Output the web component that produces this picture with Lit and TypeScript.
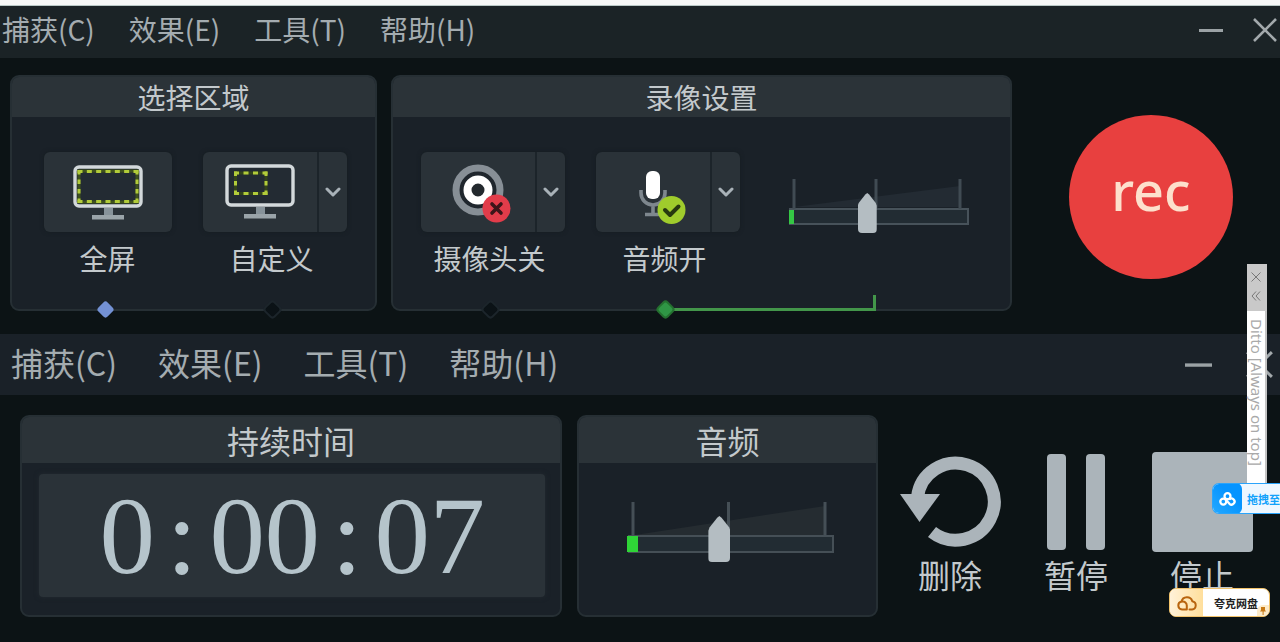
import { LitElement, html, css, svg, nothing } from "lit";
import { customElement, property } from "lit/decorators.js";
import { classMap } from "lit/directives/class-map.js";

const MENU = ["捕获(C)", "效果(E)", "工具(T)", "帮助(H)"];

const chevron = html`<svg width="16" height="10" viewBox="0 0 16 10" fill="none" stroke="#a9b2b8" stroke-width="3" stroke-linecap="round" stroke-linejoin="round"><path d="M2 2l6 6 6-6" /></svg>`;

const monitorBase = svg`
  <rect x="2" y="2" width="66" height="39" rx="4" fill="#232b33" stroke="#d3d9db" stroke-width="3.4" />
  <path d="M31 43h9v7h-9z" fill="#87939a" />
  <path d="M19 50h32v4.5h-32z" fill="#9aa4a9" />`;

const fullIcon = html`<svg width="70" height="56" viewBox="0 0 70 56">${monitorBase}
  <rect x="6" y="6" width="58" height="31" fill="none" stroke="#3f521d" stroke-width="3" />
  <path d="M4.500 6.500h61M4.500 36.500h61" stroke="#b2cc3a" stroke-width="3" stroke-dasharray="5 4.330" />
  <path d="M6 5v33M64 5v33" stroke="#b2cc3a" stroke-width="3" stroke-dasharray="4.500 5" /></svg>`;

const customIcon = html`<svg width="70" height="56" viewBox="0 0 70 56">${monitorBase}
  <rect x="10.500" y="9" width="30.500" height="20.500" fill="none" stroke="#33431c" stroke-width="3" />
  <path d="M9 9h33.500M9 29.500h33.500" stroke="#b2cc3a" stroke-width="3" stroke-dasharray="5 4.500" />
  <path d="M10.500 7.500v23.500M41 7.500v23.500" stroke="#b2cc3a" stroke-width="3" stroke-dasharray="4.500 5" /></svg>`;

const cameraIcon = html`<svg width="80" height="64" viewBox="0 0 80 64">
  <circle cx="40" cy="30" r="22" fill="#1f262d" stroke="#878f96" stroke-width="7" />
  <circle cx="40" cy="30" r="10.500" fill="#23292e" stroke="#fff" stroke-width="8" />
  <circle cx="58.500" cy="48.500" r="14" fill="#e23c4a" />
  <path d="M54 44l9 9M63 44l-9 9" stroke="#3c1519" stroke-width="3.600" stroke-linecap="round" /></svg>`;

const micIcon = html`<svg width="80" height="64" viewBox="0 0 80 64">
  <path d="M28 30v3a12 12 0 0 0 24 0v-3M40 45v9M32 54.500h16" fill="none" stroke="#7e878e" stroke-width="3.600" />
  <rect x="33" y="11" width="14" height="28" rx="6" fill="#fff" />
  <circle cx="58.500" cy="50" r="14" fill="#9fcc2c" />
  <path d="M52 50l5 5 8.500-8.500" fill="none" stroke="#27380f" stroke-width="4" stroke-linecap="round" stroke-linejoin="round" /></svg>`;

@customElement("title-bar")
class TitleBar extends LitElement {
  @property({ type: Boolean, reflect: true }) large = false;

  static styles = css`
    :host { display: flex; justify-content: space-between; align-items: center; height: 52px; padding: 0 3px 0 2px; background: #1b2326; color: #a4acb0; }
    :host([large]) { height: 61px; padding: 0 7px 0 11px; background: #1a2128; }
    .menu { display: flex; gap: 34px; }
    :host([large]) .menu { gap: 41px; }
    button { border: 0; padding: 0; margin: 0; background: none; color: inherit; font: inherit; cursor: pointer; }
    .item { font-size: 28px; line-height: 36px; padding-bottom: 6px; white-space: nowrap; }
    :host([large]) .item { font-size: 32px; }
    .controls { display: flex; align-items: center; gap: 30px; padding-bottom: 4px; }
    :host([large]) .controls { gap: 34px; padding-bottom: 1px; }
    .controls svg { display: block; width: 24px; height: 24px; }
    :host([large]) .controls svg { width: 27px; height: 27px; }
  `;

  render() {
    return html`
      <nav class="menu">${MENU.map((m) => html`<button class="item">${m}</button>`)}</nav>
      <div class="controls">
        <button aria-label="最小化"><svg viewBox="0 0 24 24"><path d="M0 12.500h24" stroke="#9ba2a5" stroke-width="3" /></svg></button>
        <button aria-label="关闭"><svg viewBox="0 0 24 24"><path d="M1 1l22 22M23 1L1 23" stroke="#a3a9ac" stroke-width="2.600" /></svg></button>
      </div>`;
  }
}

@customElement("level-slider")
class LevelSlider extends LitElement {
  @property({ type: Boolean, reflect: true }) large = false;
  @property({ type: Number }) value = 43;

  static styles = css`
    :host { display: grid; width: 180px; flex: none; }
    :host([large]) { width: 207px; }
    svg, input { grid-area: 1 / 1; width: 100%; }
    svg { display: block; height: 54px; }
    :host([large]) svg { height: 61px; }
    input { appearance: none; -webkit-appearance: none; align-self: end; margin: 0; height: 40px; background: none; }
    :host([large]) input { height: 46px; }
    input::-webkit-slider-thumb {
      -webkit-appearance: none; width: 19px; height: 40px; border-radius: 0 0 4px 4px; background: #b4bdc2;
      clip-path: polygon(50% 0, 60% 4%, 95% 25%, 100% 32%, 100% 100%, 0 100%, 0 32%, 5% 25%, 40% 4%);
    }
    :host([large]) input::-webkit-slider-thumb { width: 22px; height: 46px; }
  `;

  render() {
    const art = this.large
      ? svg`<path d="M8 34L198 5v29z" fill="#252c31" />
          <rect x="2" y="35" width="204" height="16" fill="#222c33" stroke="#454f56" stroke-width="2" />
          <path d="M6 1v34M101.500 1v34M198 1v34" stroke="#454f56" stroke-width="3" />
          <rect x="0" y="35" width="11" height="16" fill="#2fd437" />`
      : svg`<path d="M5 28L171 7v21z" fill="#232b33" />
          <rect x="1" y="30" width="178" height="15" fill="#222c33" stroke="#47525a" stroke-width="2" />
          <path d="M5 0v30M87 0v30M171 0v30" stroke="#404b53" stroke-width="3" />
          <rect x="0" y="31" width="5" height="14" fill="#35c745" />`;
    return html`
      <svg viewBox=${this.large ? "0 0 207 61" : "0 0 180 54"}>${art}</svg>
      <input type="range" min="0" max="100" .value=${String(this.value)} aria-label="音量" />`;
  }
}

@customElement("app-root")
class AppRoot extends LitElement {
  static styles = css`
    :host {
      display: block; position: relative; overflow: hidden; min-height: 100vh; background: #0c1315;
      font-family: "Noto Sans CJK SC", sans-serif; color: #c3c9cc;
    }
    * { box-sizing: border-box; }
    button { border: 0; padding: 0; margin: 0; background: none; color: inherit; font: inherit; cursor: pointer; }
    svg { display: block; }
    h2 { margin: 0; font-weight: 400; text-align: center; background: #2b3338; }

    .strip { height: 6px; background: #f6f7f7; border-bottom: 1px solid #b9c8c6; }
    .row { display: grid; align-items: stretch; }
    .setup { grid-template-columns: 367fr 621fr 250fr; gap: 14px; padding: 17px 4px 23px 10px; }
    .running { grid-template-columns: 542fr 316fr 387fr; padding: 20px 15px 24px 20px; }

    .panel { display: flex; flex-direction: column; background: #1a2128; border: 2px solid #262f34; border-radius: 9px; min-width: 0; }
    .panel h2 { border-radius: 7px 7px 0 0; }
    .setup h2 { font-size: 28px; line-height: 40px; }
    .running h2 { font-size: 32px; line-height: 46px; }
    .rec-zone { display: flex; justify-content: center; align-items: center; padding-top: 7px; }
    .audio { margin-left: 15px; }
    .actions { margin-left: 9px; display: grid; grid-template-columns: repeat(3, 1fr); }

    .tools { display: flex; justify-content: center; flex: 1; gap: 31px; padding-top: 35px; }
    .area .tools { padding-left: 3px; }
    .options .tools { padding-right: 14px; }
    .tool { position: relative; display: flex; flex-direction: column; align-items: center; padding-bottom: 33px; }
    .face { display: flex; height: 80px; border-radius: 6px; background: #2a3238; box-shadow: 0 0 4px #151c21; }
    .main { display: grid; place-items: center; width: 114px; }
    .single .main { width: 128px; padding-top: 2px; }
    .more { display: grid; place-items: center; width: 30px; border-left: 2px solid #1c242a; }
    .caption { margin-top: 8px; font-size: 28px; line-height: 36px; }
    .split .caption { padding-right: 6px; }
    .dot { position: absolute; left: calc(50% - 9px); bottom: -7px; width: 13px; height: 13px; border-radius: 3px; transform: rotate(45deg); background: #0b1216; outline: 2px solid #1c252b; outline-offset: -1px; }
    .dot.blue { background: #7391d4; outline: 0; }
    .dot.green { background: #2f9645; outline-color: #24702f; }
    .link { position: absolute; left: calc(50% + 6px); bottom: -2px; width: 202px; height: 16px; border: solid #43964a; border-width: 0 3px 3px 0; }
    .meter { padding: 27px 0 0 18px; }

    .rec { width: 164px; height: 164px; border-radius: 50%; background: #e8403f; color: #fde0cc; font: 500 54px/164px "Noto Sans", sans-serif; }
    .rec span { display: block; margin-top: -14px; }

    .clock { display: flex; justify-content: center; margin: 11px 15px 18px 17px; background: #2a3238; border-radius: 4px; color: #b5c4cb; font: 111px/123px "Liberation Serif", serif; box-shadow: 0 0 5px #222a30; }
    .digit { width: 55px; text-align: center; }
    .volume { display: flex; flex: 1; align-items: flex-start; justify-content: center; padding: 38px 0 0 6px; }

    .action { display: flex; flex-direction: column; align-items: center; padding-top: 35px; font-size: 32px; line-height: 44px; }
    .action svg { height: 104px; }
    .action span { margin-top: -2px; }

    .ditto { position: absolute; right: 13px; top: 264px; width: 20px; height: 230px; background: #fff; border-right: 2px solid #c4c4c4; color: #a9a9a9; }
    .ditto-head { display: flex; flex-direction: column; align-items: center; gap: 9px; width: 20px; height: 47px; padding: 8px 3px 0 0; background: #c9c9c9; }
    .ditto-title { writing-mode: vertical-rl; font: 15px/20px "Noto Sans", sans-serif; padding-top: 8px; white-space: nowrap; }

    .drop { position: absolute; right: 0; top: 483px; display: flex; align-items: center; width: 68px; height: 31px; overflow: hidden; border: solid #2aa4fb; border-width: 1px 0 1px 1px; border-radius: 7px 0 0 7px; background: #eef7ff; color: #12a2fb; font-size: 11px; font-weight: 700; white-space: nowrap; }
    .drop-logo { display: grid; place-items: center; flex: none; width: 29px; height: 31px; margin-right: 5px; border-radius: 6px; background: linear-gradient(45deg, #25a9ff, #0694ff 60%); }

    .quark { position: absolute; right: 10px; top: 588px; display: flex; align-items: center; width: 101px; height: 29px; overflow: hidden; border: 1px solid #f2c36b; border-radius: 7px; background: #fff; color: #222; font-size: 11px; font-weight: 700; white-space: nowrap; }
    .quark-logo { display: grid; place-items: center; flex: none; width: 33px; height: 29px; margin-right: 11px; background: linear-gradient(90deg, #fff1d8, #ffdf9c); }
    .pin { position: absolute; right: 0; bottom: 0; width: 12px; height: 11px; display: grid; place-items: center; background: #fdebc9; border-radius: 6px 0 0 0; }
  `;

  private tool(id: string, label: string, icon: unknown, split: boolean, dot: string, link = false) {
    return html`
      <div class=${classMap({ tool: true, split, single: !split })}>
        <div class="face">
          <button class="main" aria-labelledby=${id}>${icon}</button>
          ${split ? html`<button class="more" aria-label="更多选项">${chevron}</button>` : nothing}
        </div>
        <span class="caption" id=${id}>${label}</span>
        ${link ? html`<span class="link"></span>` : nothing}
        <span class="dot ${dot}"></span>
      </div>`;
  }

  render() {
    return html`
      <div class="strip"></div>
      <title-bar></title-bar>
      <section class="row setup">
        <div class="panel area">
          <h2>选择区域</h2>
          <div class="tools">
            ${this.tool("full", "全屏", fullIcon, false, "blue")}
            ${this.tool("custom", "自定义", customIcon, true, "")}
          </div>
        </div>
        <div class="panel options">
          <h2>录像设置</h2>
          <div class="tools">
            ${this.tool("camera", "摄像头关", cameraIcon, true, "")}
            ${this.tool("mic", "音频开", micIcon, true, "green", true)}
            <div class="meter"><level-slider .value=${43}></level-slider></div>
          </div>
        </div>
        <div class="rec-zone"><button class="rec"><span>rec</span></button></div>
      </section>

      <title-bar large></title-bar>
      <section class="row running">
        <div class="panel duration">
          <h2>持续时间</h2>
          <div class="clock">${[..."0:00:07"].map((c) => html`<span class="digit">${c}</span>`)}</div>
        </div>
        <div class="panel audio">
          <h2>音频</h2>
          <div class="volume"><level-slider large .value=${44}></level-slider></div>
        </div>
        <div class="actions">
          <button class="action">
            <svg width="104" viewBox="0 0 104 104">
              <path d="M19.500 47A38.500 38.500 0 1 1 34 82" fill="none" stroke="#abb4ba" stroke-width="13" />
              <path d="M2 44h40L21.500 72z" fill="#abb4ba" />
            </svg>
            <span>删除</span>
          </button>
          <button class="action">
            <svg width="104" viewBox="0 0 104 104" fill="#abb4ba">
              <rect x="23" y="4" width="19" height="96" rx="4" /><rect x="62" y="4" width="19" height="96" rx="4" />
            </svg>
            <span>暂停</span>
          </button>
          <button class="action">
            <svg width="104" viewBox="0 0 104 104" fill="#abb4ba"><rect x="2" y="2" width="101" height="100" rx="4" /></svg>
            <span>停止</span>
          </button>
        </div>
      </section>

      <aside class="ditto">
        <div class="ditto-head">
          <button aria-label="关闭"><svg width="10" height="10" viewBox="0 0 10 10" stroke="#777" stroke-width="1"><path d="M.5.5l9 9M9.500.5l-9 9" /></svg></button>
          <button aria-label="展开"><svg width="10" height="10" viewBox="0 0 10 10" fill="none" stroke="#777" stroke-width="1"><path d="M5 .5L1 5l4 4.500M9 .5L5 5l4 4.500" /></svg></button>
        </div>
        <div class="ditto-title">Ditto [Always on top]</div>
      </aside>

      <button class="drop">
        <span class="drop-logo"><svg width="17" height="14" viewBox="0 0 17 14" fill="none" stroke="#fff" stroke-width="2.300">
          <circle cx="8.500" cy="4.200" r="3" /><circle cx="4.300" cy="9.600" r="3" /><path d="M10.300 7.500a3 3 0 1 1 .2 4.300L6.800 7.800" /></svg></span>
        <span>拖拽至</span>
      </button>

      <button class="quark">
        <span class="quark-logo"><svg width="20" height="16" viewBox="0 0 20 16" fill="none" stroke="#b8640f" stroke-width="2" stroke-linecap="round">
          <path d="M8.500 14.500H5A4 4 0 0 1 4.500 6.600 5.600 5.600 0 0 1 15.300 6.200 4.200 4.200 0 0 1 15 14.500H12.500M4.500 6.800c3-.8 5.300 1 5.300 3.600v4" /></svg></span>
        <span>夸克网盘</span>
        <span class="pin"><svg width="6" height="8" viewBox="0 0 6 8" fill="#c77916"><path d="M1 0h4v3l1 1.500H3.600V8h-1V4.500H0L1 3z" /></svg></span>
      </button>
    `;
  }
}
